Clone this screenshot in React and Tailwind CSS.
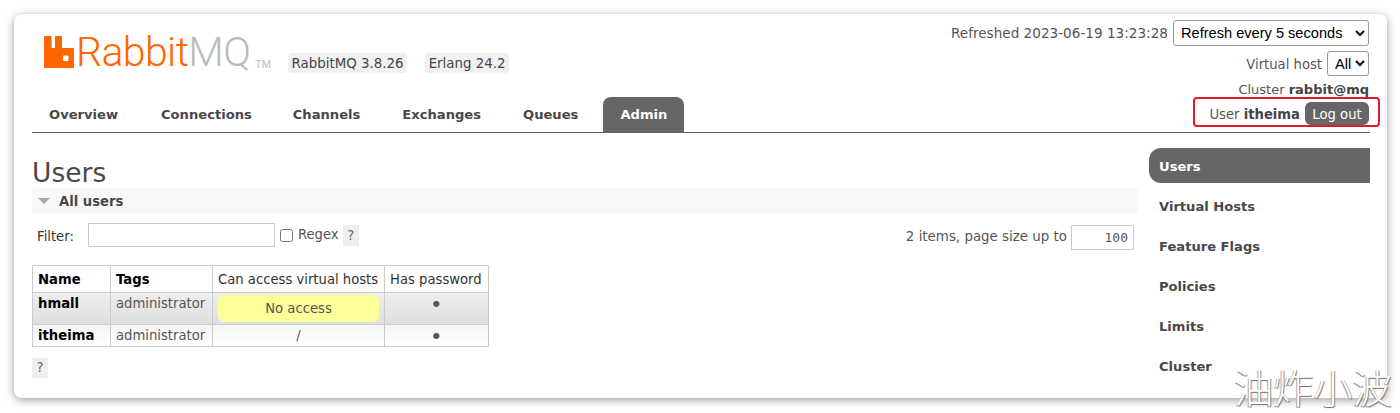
const tabs = [
  { name: 'Overview', ml: 'ml-0' },
  { name: 'Connections', ml: 'ml-[9px]' },
  { name: 'Channels', ml: 'ml-[7px]' },
  { name: 'Exchanges', ml: 'ml-2' },
  { name: 'Queues', ml: 'ml-2' },
];

const sideLinks = ['Virtual Hosts', 'Feature Flags', 'Policies', 'Limits', 'Cluster'];

function Logo() {
  return (
    <div className="flex items-start">
      <svg className="w-[30px] h-[32px] mt-[22px] ml-[12px] shrink-0" viewBox="0 0 30 32">
        <path
          fill="#ff6600"
          fillRule="evenodd"
          d="M0 1a1 1 0 0 1 1-1h5.500a1 1 0 0 1 1 1v11h3.500V1a1 1 0 0 1 1-1H17a1 1 0 0 1 1 1v11h11a1 1 0 0 1 1 1v18a1 1 0 0 1-1 1H1a1 1 0 0 1-1-1z M19 20.500a1 1 0 0 1 1-1h3.500a1 1 0 0 1 1 1V24a1 1 0 0 1-1 1H20a1 1 0 0 1-1-1z"
        />
      </svg>
      <div className="w-[174px] ml-[2px] mt-[15px] text-[41px] leading-[46px] font-[Roboto,sans-serif] font-light tracking-[-0.6px] text-[#ff6600] whitespace-nowrap">
        Rabbit<span className="text-[#bbbbbb]">MQ</span>
      </div>
      <span className="w-[15px] ml-[5px] mt-[44px] text-[11px] leading-3 text-[#bbbbbb] font-['Liberation_Sans',sans-serif]">TM</span>
      <div className="flex gap-[18px] mt-[39px] ml-[18px] text-[13.400px] leading-[21px] text-[#444444]">
        <span className="h-[20px] bg-[#f0f0f0] rounded px-[3.500px]">RabbitMQ 3.8.26</span>
        <span className="h-[20px] bg-[#f0f0f0] rounded px-[3.500px]">Erlang 24.2</span>
      </div>
    </div>
  );
}

function Header() {
  return (
    <div className="flex justify-between items-end border-b border-[#666666] h-[119px]">
      <div className="flex flex-col justify-between h-full">
        <Logo />
        <div className="flex">
          {tabs.map(t => (
            <a key={t.name} className={`${t.ml} px-[17px] h-[35px] leading-[36px] text-[13.100px] font-bold text-[#484848]`}>{t.name}</a>
          ))}
          <a className="ml-2 px-[17px] h-[35px] leading-[36px] text-[13.100px] font-bold text-white bg-[#666666] rounded-t-lg">Admin</a>
        </div>
      </div>
      <div className="flex flex-col items-end mr-px text-[13.200px] text-[#555555] h-full">
        <div className="flex items-center mt-[6px] h-[26px]">
          <span className="mr-[5px] text-[13.600px]">Refreshed 2023-06-19 13:23:28</span>
          <select defaultValue="5" className="w-[196px] h-[26px] pl-[3px] text-[14.600px] text-black bg-white border border-[#999999] rounded-[3px] font-['Liberation_Sans',sans-serif]">
            <option value="5">Refresh every 5 seconds</option>
          </select>
        </div>
        <div className="flex items-center mt-[5px] h-[25px]">
          <span className="mr-[5px] mt-[2px]">Virtual host</span>
          <select defaultValue="all" className="w-[42px] h-[25px] pl-[3px] text-[14.600px] text-black bg-white border border-[#999999] rounded-[3px] font-['Liberation_Sans',sans-serif]">
            <option value="all">All</option>
          </select>
        </div>
        <div className="mt-[4px] h-[18px] leading-[20px] text-[13px]">Cluster <b className="text-[#444444]">rabbit@mq</b></div>
        <div className="flex items-center mt-[4px] h-[23px]">
          <span className="mt-[2px]">User <b className="text-[#444444]">itheima</b></span>
          <span className="ml-[5px] w-[64px] h-[23px] leading-[25px] text-center rounded-md bg-[#666666] text-white">Log out</span>
        </div>
      </div>
    </div>
  );
}

function UsersTable() {
  const th = 'border border-[#cccccc] px-[5px] pt-[2px] h-[27px] text-left text-[13.200px] text-[#333333] whitespace-nowrap';
  const td = 'border border-[#cccccc] px-[5px] pt-px align-top text-[13.200px] leading-[20px]';
  const dot = 'border border-[#cccccc] pt-px align-top text-center text-[8px] leading-[20px]';
  return (
    <table className="mt-[17px] w-[456px] table-fixed border-collapse text-[#555555]">
      <colgroup>
        <col className="w-[78px]" />
        <col className="w-[102px]" />
        <col className="w-[172px]" />
        <col className="w-[104px]" />
      </colgroup>
      <thead>
        <tr>
          <th className={`${th} font-bold text-black`}>Name</th>
          <th className={`${th} font-bold text-black`}>Tags</th>
          <th className={`${th} font-normal`}>Can access virtual hosts</th>
          <th className={`${th} font-normal`}>Has password</th>
        </tr>
      </thead>
      <tbody>
        <tr className="h-[32px] bg-gradient-to-b from-[#eeeeee] to-[#dedede]">
          <td className={`${td} font-bold text-black`}>hmall</td>
          <td className={td}>administrator</td>
          <td className="border border-[#cccccc] px-[5px] py-[2px]">
            <div className="h-[27px] leading-[28px] text-center text-[13.200px] bg-[#ffff99] rounded-md">No access</div>
          </td>
          <td className={dot}>●</td>
        </tr>
        <tr className="h-[22px] bg-gradient-to-b from-[#f5f5f5] to-white">
          <td className={`${td} font-bold text-black`}>itheima</td>
          <td className={td}>administrator</td>
          <td className={`${td} text-center`}>/</td>
          <td className={dot}>●</td>
        </tr>
      </tbody>
    </table>
  );
}

function Main() {
  return (
    <div className="w-[1106px]">
      <h1 className="mt-[20px] h-[35px] text-[26.500px] leading-[40px] text-[#484848]">Users</h1>
      <div className="flex items-center h-[26px] bg-[#f8f8f8] rounded">
        <span className="ml-[6px] w-0 h-0 border-x-[6px] border-x-transparent border-t-[6px] border-t-[#aaaaaa]" />
        <span className="ml-[9px] pt-px text-[13.200px] font-bold text-[#484848]">All users</span>
      </div>
      <div className="flex items-center justify-between mt-[8px] h-[26px] text-[13.200px] text-[#555555]">
        <div className="flex items-center">
          <span className="ml-[5px] mt-[3px] text-[#333333]">Filter:</span>
          <input className="ml-[14px] w-[187px] h-[24px] border border-[#cccccc] bg-white" />
          <input type="checkbox" className="ml-[5px] w-[13px] h-[13px]" />
          <span className="ml-[5px]">Regex</span>
          <span className="ml-[4px] w-[16px] h-[21px] leading-[21px] text-center bg-[#eeeeee] text-[#666666]">?</span>
        </div>
        <div className="flex items-center mt-[5px] pr-[4px]">
          <span className="text-[13.400px]">2 items, page size up to</span>
          <input readOnly value="100" className="ml-[4px] w-[63px] h-[25px] px-[5px] text-right text-[13px] border border-[#cccccc] font-['DejaVu_Sans_Mono',monospace] bg-white" />
        </div>
      </div>
      <UsersTable />
      <div className="mt-[11px] w-[16px] h-[20px] leading-[20px] text-center text-[13.200px] bg-[#eeeeee] text-[#666666]">?</div>
    </div>
  );
}

function Sidebar() {
  return (
    <div className="w-[221px] mt-[15px] text-[13.100px] font-bold text-[#484848]">
      <div className="h-[35px] leading-[37px] pl-[10px] bg-[#666666] text-white rounded-l-xl">Users</div>
      {sideLinks.map((name, i) => (
        <div key={name} className={`${i === 0 ? 'mt-[4px]' : ''} h-[40px] leading-[40px] pl-[10px]`}>{name}</div>
      ))}
    </div>
  );
}

export default function App() {
  return (
    <div className="relative w-[1400px] h-[413px] overflow-hidden bg-white font-['DejaVu_Sans',sans-serif]">
      <div className="relative ml-[14px] mt-[14px] w-[1373px] h-[384px] pl-[18px] pr-[17px] bg-white rounded-lg shadow-[0_2px_8px_rgba(0,0,0,0.4)]">
        <Header />
        <div className="flex justify-between">
          <Main />
          <Sidebar />
        </div>
      </div>
      <div className="absolute left-[1193px] top-[97px] w-[187px] h-[30px] border-2 border-[#d81e2c] rounded" />
      <div className="absolute left-[1234px] top-[362px] text-[39.500px] leading-[48px] whitespace-nowrap text-white font-['Noto_Sans_CJK_SC',sans-serif] font-light [text-shadow:1px_1px_1px_#777777,-1px_1px_0_#aaaaaa]">油炸小波</div>
    </div>
  );
}
